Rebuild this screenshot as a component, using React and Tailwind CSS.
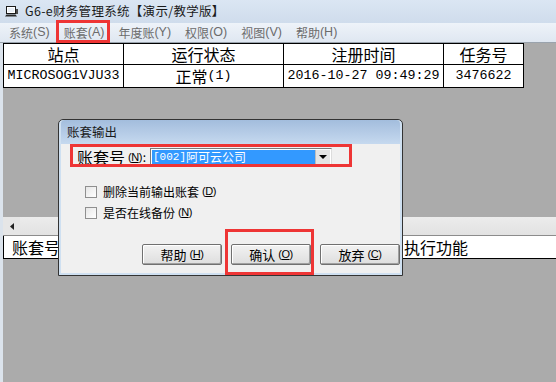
const cjk = "font-['Noto_Sans_CJK_SC',sans-serif]";
const mono = "font-['Liberation_Mono','Noto_Sans_CJK_SC',monospace]";

function AppIcon() {
  return (
    <svg width="13" height="11" viewBox="0 0 13 11">
      <rect x="1.5" y="0.5" width="9" height="7" fill="#fff" stroke="#1a1a1a" />
      <rect x="3" y="2" width="6" height="4" fill="#e8eef6" />
      <path d="M0 10.5 H12 L10.5 8.5 H1.5 Z" fill="#2a2a2a" />
      <rect x="11" y="3" width="2" height="5" fill="#4a4a4a" />
    </svg>
  );
}

function Key({ k }) {
  return (
    <span className="font-['Liberation_Sans',sans-serif] text-[11px] tracking-[-0.5px] ml-[3px]">
      (<span className="underline">{k}</span>)
    </span>
  );
}

const menus = [
  ["系统", "S"],
  ["账套", "A"],
  ["年度账", "Y"],
  ["权限", "O"],
  ["视图", "V"],
  ["帮助", "H"],
];

function Cell({ w, children, last }) {
  return (
    <div
      className={`${w} flex items-center justify-center ${last ? "" : "border-r border-black"}`}
    >
      {children}
    </div>
  );
}

function Btn({ label, k }) {
  return (
    <button className="w-[80px] h-[21px] flex items-center justify-center border border-[#707070] rounded-[2px] bg-gradient-to-b from-[#f2f2f2] to-[#dedede] shadow-[inset_-1px_-1px_0_#a0a0a0,inset_1px_1px_0_#fff] text-[13px] text-black">
      <span className={cjk}>{label}</span>
      <Key k={k} />
    </button>
  );
}

function Check({ label, k }) {
  return (
    <div className="flex items-center gap-[6px] h-[13px]">
      <div className="w-[12px] h-[12px] border border-[#8f8f8f] bg-gradient-to-br from-[#e6e6e6] to-white" />
      <span className="flex items-center text-[12px] leading-none text-black">
        {label}
        <Key k={k} />
      </span>
    </div>
  );
}

export default function App() {
  return (
    <div className={`relative w-[556px] h-[382px] overflow-hidden flex flex-col bg-[#ababab] ${cjk}`}>
      {/* title bar */}
      <div className="h-[23px] flex items-center gap-[7px] pl-[5px] bg-gradient-to-b from-[#dbe6f3] to-[#cfdcec]">
        <AppIcon />
        <span className="text-[12.5px] text-[#1a1a1a] tracking-[0.3px]">G6-e财务管理系统【演示/教学版】</span>
      </div>
      {/* menu bar */}
      <div className="h-[20px] flex items-center gap-[14px] pl-[9px] bg-gradient-to-b from-[#eef3f9] to-[#dfe7f1] border-b border-[#9aa3ad]">
        {menus.map(([t, k]) => (
          <span key={k} className="text-[12px] text-[#6b6b6b] flex items-center">
            {t}
            <span className="font-['Liberation_Sans',sans-serif] text-[12.5px]">({k})</span>
          </span>
        ))}
      </div>
      {/* content */}
      <div className="flex-1 flex flex-col border-l-[3px] border-[#dbe3ec]">
        <div className="w-[521px] border border-black bg-white text-black">
          <div className="flex h-[21px] border-b border-black text-[16px]">
            <Cell w="w-[120px]">站点</Cell>
            <Cell w="w-[160px]">运行状态</Cell>
            <Cell w="w-[160px]">注册时间</Cell>
            <Cell w="flex-1" last>任务号</Cell>
          </div>
          <div className="flex h-[22px] text-[16px]">
            <Cell w="w-[120px]">
              <span className={`${mono} text-[13.33px]`}>MICROSOG1VJU33</span>
            </Cell>
            <Cell w="w-[160px]">
              正常<span className={`${mono} text-[13.33px]`}>(1)</span>
            </Cell>
            <Cell w="w-[160px]">
              <span className={`${mono} text-[13.33px]`}>2016-10-27 09:49:29</span>
            </Cell>
            <Cell w="flex-1" last>
              <span className={`${mono} text-[13.33px]`}>3476622</span>
            </Cell>
          </div>
        </div>
        <div className="h-[129px]" />
        {/* scroll bar */}
        <div className="h-[19px] flex items-center bg-gradient-to-b from-[#ececec] to-[#e2e2e2] border-b border-[#8c8c8c]">
          <div className="w-[17px] h-full flex items-center justify-center bg-[#e6e6e6]">
            <svg width="4" height="7" viewBox="0 0 4 7">
              <path d="M4 0 V7 L0 3.5 Z" fill="#222" />
            </svg>
          </div>
        </div>
        <div className="h-[23px] flex items-center bg-white border-b border-l border-black text-[16px] text-black">
          <span className="pl-[8px] w-[400px]">账套号</span>
          <span>执行功能</span>
        </div>
      </div>

      {/* menu highlight */}
      <div className="absolute left-[56px] top-[20px] w-[54px] h-[23px] border-[3px] border-[#ee3535]" />

      {/* dialog */}
      <div className="absolute left-[58px] top-[119px] w-[345px] h-[157px] flex flex-col rounded-t-[5px] border border-[#333] bg-[#cfe0f1] p-[2px] pt-0">
        <div className="h-[24px] flex items-center pl-[6px] rounded-t-[4px] bg-gradient-to-b from-[#a3bddd] to-[#c6d9ef] text-[12.5px] text-[#1a1a1a]">
          账套输出
        </div>
        <div className="flex-1 bg-[#f0f0f0] flex flex-col pl-[24px] pt-[4px]">
          <div className="flex items-center h-[18px] ml-[-8px]">
            <span className="w-[73px] whitespace-nowrap flex items-center text-[16px] text-black">
              账套号
              <Key k="N" />
              <span className="text-[12px] ml-[1px]">:</span>
            </span>
            <div className="w-[182px] h-[18px] flex items-center border border-[#7a7a7a] border-b-[#dcdcdc] border-r-[#dcdcdc] bg-white p-[1px]">
              <div className="flex-1 h-full flex items-center bg-[#3399ff] pl-[1px] text-white text-[12px] leading-none">
                <span className={`${mono} text-[11px]`}>[002]</span>阿可云公司
              </div>
              <div className="w-[15px] h-full flex items-center justify-center bg-[#e4e4e4] border-l border-[#bdbdbd]">
                <svg width="8" height="4" viewBox="0 0 8 4">
                  <path d="M0 0 H8 L4 4 Z" fill="#000" />
                </svg>
              </div>
            </div>
          </div>
          <div className="flex flex-col gap-[8px] mt-[19px]">
            <Check label="删除当前输出账套" k="D" />
            <Check label="是否在线备份" k="N" />
          </div>
          <div className="flex gap-[9px] ml-[57px] mt-[25px]">
            <Btn label="帮助" k="H" />
            <Btn label="确认" k="O" />
            <Btn label="放弃" k="C" />
          </div>
        </div>
      </div>

      {/* dialog highlights */}
      <div className="absolute left-[70px] top-[144px] w-[282px] h-[23px] border-[3px] border-[#ee3535]" />
      <div className="absolute left-[225px] top-[229px] w-[89px] h-[46px] border-[3px] border-[#ee3535]" />
    </div>
  );
}
